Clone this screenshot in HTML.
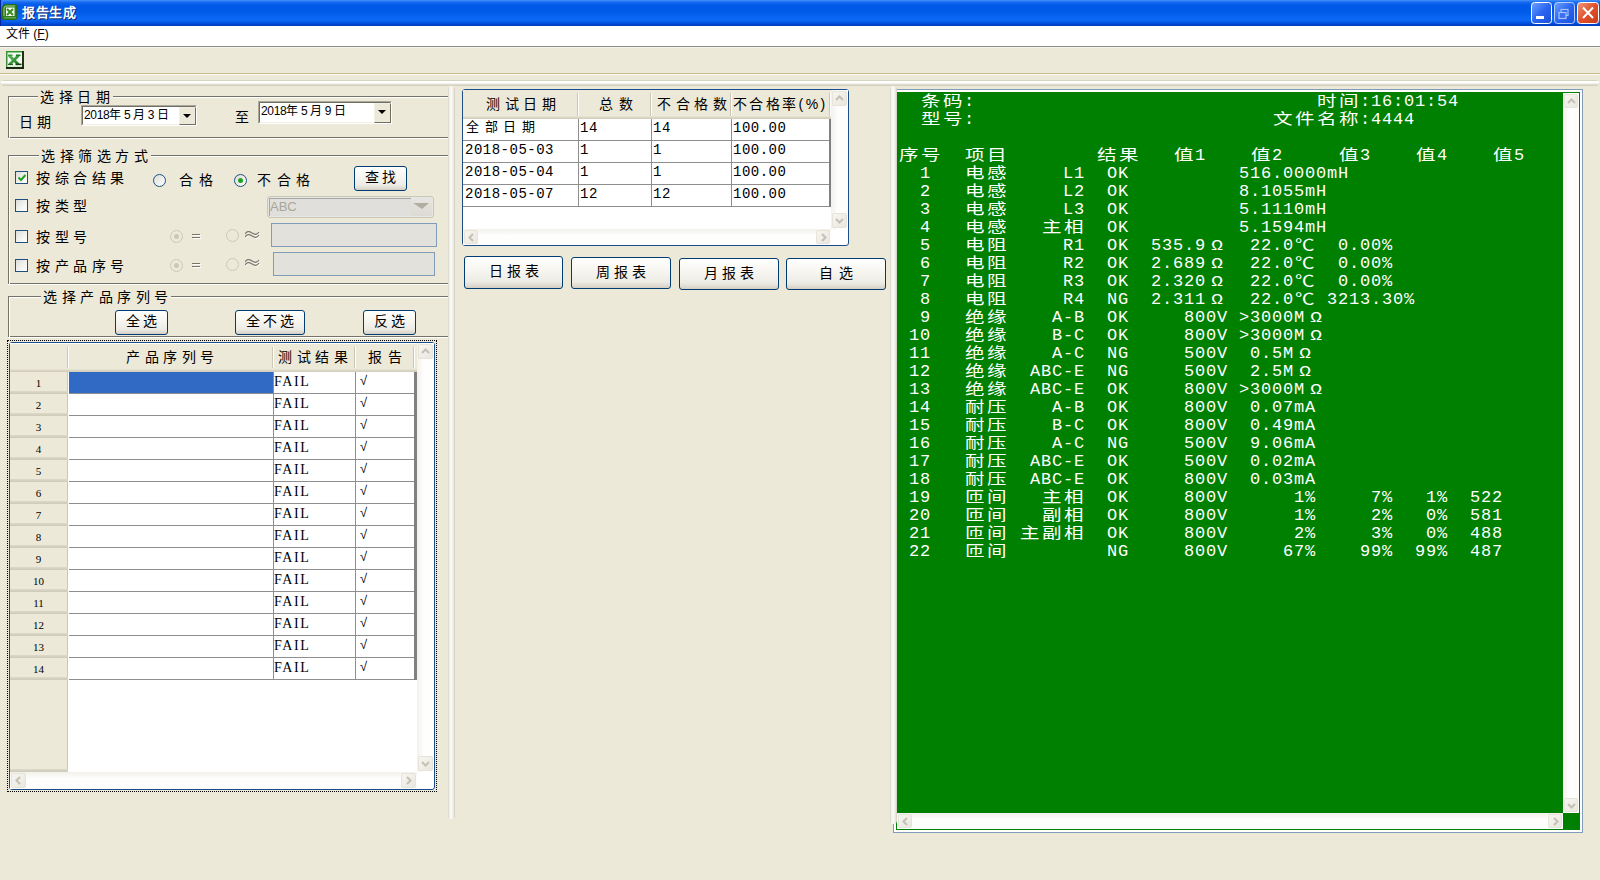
<!DOCTYPE html><html lang="zh-CN"><head><meta charset="utf-8"><title>报告生成</title><style>
*{margin:0;padding:0;box-sizing:border-box}
html,body{width:1600px;height:880px;overflow:hidden;background:#ece9d8;font-family:"Liberation Sans",sans-serif;}
.a,.t{position:absolute}
.t{white-space:pre;line-height:1;}
.btn{position:absolute;border:1px solid #003c74;border-radius:3px;background:linear-gradient(#ffffff 0%,#f7f6f1 40%,#ecebe4 80%,#d6d0c5 100%);box-shadow:inset 0 -1px 0 #d6d0c5;}
.sb{position:absolute;}
.gl{position:absolute;white-space:pre;line-height:18px;height:18px;font-family:"Liberation Mono",monospace;font-size:16px;color:#fff;}
.ga{font-family:"Liberation Mono",monospace;font-size:17px;letter-spacing:0.8px;}
.gc{display:inline-block;width:22px;font-style:normal;font-size:16px;text-align:center;transform:scale(1.22,0.95);transform-origin:50% 80%;}
.etch{position:absolute;border:1px solid #a9a697;}
</style></head><body>
<div class="a" style="left:0px;top:0px;width:1600px;height:26px;background:linear-gradient(#4a96fa 0px,#2a7cf6 1px,#0f64ee 3px,#0058e8 6px,#005ce8 12px,#0a66f4 18px,#0c68f6 20px,#0052de 23px,#0040c8 25px,#0038b8 26px);"></div>
<div class="a" style="left:0px;top:0px;width:1px;height:26px;background:#0024a0;"></div>
<div class="a" style="left:1px;top:0px;width:2px;height:26px;background:linear-gradient(#3a80f0,#0048d8);"></div>
<svg class="a" style="left:2px;top:4px" width="15" height="16" viewBox="0 0 15 16">
<path d="M4 0.5 H13.5 Q14.5 0.5 14.5 1.5 V14.5 Q14.5 15.5 13.5 15.5 H2 Q0.5 15.5 0.5 14 V4 Q0.5 0.5 4 0.5 Z" fill="#2f7d1f" stroke="#2a6a14"/>
<path d="M2 12 V4.5 Q2 2 4.5 2 H13" stroke="#9ad08a" stroke-width="1" fill="none"/>
<rect x="4" y="3.5" width="8.5" height="8.5" fill="#f4fbef"/>
<path d="M5 5 L11 11 M11 5 L5 11" stroke="#3a8a22" stroke-width="2"/>
<rect x="2" y="13" width="12" height="1.5" fill="#5aa04a"/>
</svg>
<div class="t " style="left:22px;top:6px;font-size:13px;color:#fff;font-weight:bold;text-shadow:1px 1px 0 #0a1e6a;letter-spacing:0.5px;">报告生成</div>
<svg class="a" style="left:1530px;top:2px" width="70" height="23" viewBox="0 0 70 23">
<defs>
<linearGradient id="gb" x1="0" y1="0" x2="1" y2="1"><stop offset="0" stop-color="#6fa2ff"/><stop offset="0.5" stop-color="#2a66f0"/><stop offset="1" stop-color="#1a50d8"/></linearGradient>
<linearGradient id="gr" x1="0" y1="0" x2="1" y2="1"><stop offset="0" stop-color="#f09a7a"/><stop offset="0.5" stop-color="#e0502a"/><stop offset="1" stop-color="#c83c1a"/></linearGradient>
</defs>
<rect x="1.5" y="0.5" width="20" height="21" rx="3" fill="url(#gb)" stroke="#fff"/>
<rect x="6" y="14" width="8" height="3" fill="#fff"/>
<rect x="24.5" y="0.5" width="20" height="21" rx="3" fill="url(#gb)" stroke="#d8e4ff" stroke-opacity="0.8"/>
<rect x="31" y="7.5" width="7" height="6" fill="none" stroke="#a8c0f8" stroke-width="1.2"/>
<rect x="29" y="10.5" width="7" height="6" fill="#3a70f0" stroke="#a8c0f8" stroke-width="1.2"/>
<rect x="47.5" y="0.5" width="21" height="21" rx="3" fill="url(#gr)" stroke="#fff"/>
<path d="M53 5.5 L63 16 M63 5.5 L53 16" stroke="#fff" stroke-width="2"/>
</svg>
<div class="a" style="left:0px;top:26px;width:1600px;height:20px;background:#fff;"></div>
<div class="t" style="left:6px;top:28px;font-size:12px;">文件 (<u>F</u>)</div>
<div class="a" style="left:0px;top:46px;width:1600px;height:1px;background:#8c8c8c;"></div>
<div class="a" style="left:0px;top:47px;width:1600px;height:1px;background:#f6f4ec;"></div>
<svg class="a" style="left:6px;top:51px" width="18" height="18" viewBox="0 0 18 18">
<defs><linearGradient id="xg" x1="0" y1="0" x2="1" y2="1"><stop offset="0" stop-color="#5cb85c"/><stop offset="1" stop-color="#1e7a1e"/></linearGradient></defs>
<rect x="0" y="0" width="18" height="18" fill="#3c8c3c"/>
<rect x="0" y="0" width="18" height="1.2" fill="#2a9a2a"/>
<rect x="16" y="0" width="2" height="18" fill="#1c3414"/>
<rect x="0" y="16" width="18" height="2" fill="#16280e"/>
<rect x="1.5" y="1.5" width="14.5" height="14.5" fill="#f2fbf2"/>
<path d="M3 4.5 L12.5 13.5 M12.5 4.5 L3.5 13.5" stroke="url(#xg)" stroke-width="2.8"/>
<rect x="2" y="3.5" width="4.5" height="1.6" fill="#3a9a3a"/>
<rect x="10" y="3.5" width="4.5" height="1.6" fill="#1e7a1e"/>
<rect x="9.5" y="12.6" width="6" height="1.6" fill="#1e3a12"/>
<rect x="2" y="12.8" width="5" height="1.2" fill="#2a5a1a"/>
<rect x="1.5" y="14.5" width="14.5" height="1.5" fill="#d4eed4"/>
</svg>
<div class="a" style="left:0px;top:73px;width:1600px;height:1px;background:#c5bb8f;"></div>
<div class="a" style="left:0px;top:74px;width:1600px;height:1px;background:#fbfaf4;"></div>
<div class="a" style="left:1px;top:80px;width:1598px;height:6px;border-radius:3px;background:linear-gradient(#d8d4c4 0px,#d8d4c4 1px,#fdfdfb 1px,#ffffff 3px,#e6e3d6 4px,#cfcbbb 6px);"></div>
<div class="a" style="left:8px;top:96px;width:441px;height:42px;border:1px solid #757368;"></div>
<div class="a" style="left:9px;top:97px;width:441px;height:42px;border-top:1px solid #fff;border-left:1px solid #fff;"></div>
<div class="a" style="left:8px;top:138px;width:442px;height:1px;background:#fff;"></div>
<div class="a" style="left:449px;top:96px;width:1px;height:43px;background:#fff;"></div>
<div class="t" style="left:38px;top:90px;font-size:14px;background:#ece9d8;padding:0 3px 0 2px;"><span style="letter-spacing:4.5px">选择日</span>期</div>
<div class="t " style="left:19px;top:115px;font-size:14px;color:#000;letter-spacing:4px;">日期</div>
<div class="a" style="left:81px;top:105px;width:116px;height:21px;background:#fff;border-top:1px solid #aca899;border-left:1px solid #aca899;border-right:1px solid #fff;border-bottom:1px solid #fff;"></div>
<div class="a" style="left:82px;top:106px;width:114px;height:19px;border-top:1px solid #716f64;border-left:1px solid #716f64;border-right:1px solid #f1efe2;border-bottom:1px solid #f1efe2;"></div>
<div class="a" style="left:179px;top:107px;width:17px;height:18px;background:#ece9d8;border-top:1px solid #f1efe2;border-left:1px solid #f1efe2;border-right:1px solid #716f64;border-bottom:1px solid #716f64;"></div>
<svg class="a" style="left:183px;top:114px" width="9" height="5"><path d="M0 0 H8 L4 4 Z" fill="#000"/></svg>
<div class="t" style="left:84px;top:109px;font-size:12px;letter-spacing:-0.35px;">2018年 5 月 3 日</div>
<div class="t " style="left:235px;top:110px;font-size:14px;color:#000;">至</div>
<div class="a" style="left:258px;top:101px;width:134px;height:23px;background:#fff;border-top:1px solid #aca899;border-left:1px solid #aca899;border-right:1px solid #fff;border-bottom:1px solid #fff;"></div>
<div class="a" style="left:259px;top:102px;width:132px;height:21px;border-top:1px solid #716f64;border-left:1px solid #716f64;border-right:1px solid #f1efe2;border-bottom:1px solid #f1efe2;"></div>
<div class="a" style="left:374px;top:103px;width:17px;height:20px;background:#ece9d8;border-top:1px solid #f1efe2;border-left:1px solid #f1efe2;border-right:1px solid #716f64;border-bottom:1px solid #716f64;"></div>
<svg class="a" style="left:378px;top:110px" width="9" height="5"><path d="M0 0 H8 L4 4 Z" fill="#000"/></svg>
<div class="t" style="left:261px;top:105px;font-size:12px;letter-spacing:-0.35px;">2018年 5 月 9 日</div>
<div class="a" style="left:8px;top:155px;width:441px;height:129px;border:1px solid #757368;"></div>
<div class="a" style="left:9px;top:156px;width:441px;height:129px;border-top:1px solid #fff;border-left:1px solid #fff;"></div>
<div class="a" style="left:8px;top:284px;width:442px;height:1px;background:#fff;"></div>
<div class="a" style="left:449px;top:155px;width:1px;height:130px;background:#fff;"></div>
<div class="t" style="left:39px;top:149px;font-size:14px;background:#ece9d8;padding:0 3px 0 2px;"><span style="letter-spacing:4.5px">选择筛选方</span>式</div>
<div class="a" style="left:15px;top:171px;width:13px;height:13px;border:1px solid #1c5180;background:linear-gradient(135deg,#dcdcd7 0%,#f4f4f1 60%,#fff 100%);"></div>
<svg class="a" style="left:18px;top:174px" width="8" height="8"><path d="M0.5 3.5 L3 6 L7.5 1" stroke="#21a121" stroke-width="2" fill="none"/></svg>
<div class="t " style="left:36px;top:171px;font-size:14px;color:#000;letter-spacing:4.6px;">按综合结果</div>
<div class="a" style="left:15px;top:199px;width:13px;height:13px;border:1px solid #1c5180;background:linear-gradient(135deg,#dcdcd7 0%,#f4f4f1 60%,#fff 100%);"></div>
<div class="t " style="left:36px;top:199px;font-size:14px;color:#000;letter-spacing:4.6px;">按类型</div>
<div class="a" style="left:15px;top:230px;width:13px;height:13px;border:1px solid #1c5180;background:linear-gradient(135deg,#dcdcd7 0%,#f4f4f1 60%,#fff 100%);"></div>
<div class="t " style="left:36px;top:230px;font-size:14px;color:#000;letter-spacing:4.6px;">按型号</div>
<div class="a" style="left:15px;top:259px;width:13px;height:13px;border:1px solid #1c5180;background:linear-gradient(135deg,#dcdcd7 0%,#f4f4f1 60%,#fff 100%);"></div>
<div class="t " style="left:36px;top:259px;font-size:14px;color:#000;letter-spacing:4.6px;">按产品序号</div>
<svg class="a" style="left:153px;top:174px" width="13" height="13"><defs><linearGradient id="rg153174" x1="0" y1="0" x2="1" y2="1"><stop offset="0" stop-color="#dcdcd7"/><stop offset="1" stop-color="#fff"/></linearGradient></defs><circle cx="6.5" cy="6.5" r="6" fill="url(#rg153174)" stroke="#1c5180"/></svg>
<div class="t " style="left:179px;top:173px;font-size:14px;color:#000;letter-spacing:6px;">合格</div>
<svg class="a" style="left:234px;top:174px" width="13" height="13"><defs><linearGradient id="rg234174" x1="0" y1="0" x2="1" y2="1"><stop offset="0" stop-color="#dcdcd7"/><stop offset="1" stop-color="#fff"/></linearGradient></defs><circle cx="6.5" cy="6.5" r="6" fill="url(#rg234174)" stroke="#1c5180"/><circle cx="6.5" cy="6.5" r="2.5" fill="#21a121"/></svg>
<div class="t " style="left:257px;top:173px;font-size:14px;color:#000;letter-spacing:5.5px;">不合格</div>
<div class="btn" style="left:354px;top:166px;width:53px;height:25px;"></div>
<div class="t" style="left:354px;top:170px;width:53px;text-align:center;font-size:14px;letter-spacing:3px;text-indent:3px;">查找</div>
<div class="a" style="left:267px;top:196px;width:167px;height:22px;border:1px solid #c9c7ba;border-radius:3px;background:#e6e5e0;"></div>
<div class="a" style="left:269px;top:198px;width:142px;height:18px;background:#e0dfdb;border-top:1px solid #a7a69f;border-left:1px solid #a7a69f;"></div>
<div class="t " style="left:270px;top:200px;font-size:13px;color:#a8a698;">ABC</div>
<div class="a" style="left:411px;top:198px;width:21px;height:18px;background:linear-gradient(#e6e5e0,#dcdad3);border-radius:0 2px 2px 0;"></div>
<svg class="a" style="left:412px;top:202px" width="18" height="8"><path d="M1 1 L17 1 L10 7 Z" fill="#b0aea2"/></svg>
<svg class="a" style="left:170px;top:230px" width="13" height="13"><circle cx="6.5" cy="6.5" r="6" fill="none" stroke="#cac8bb"/><circle cx="6.5" cy="6.5" r="2.5" fill="#cac8bb"/></svg>
<svg class="a" style="left:192px;top:233px" width="10" height="7"><path d="M0 1.5H8M0 4.5H8" stroke="#fff" stroke-width="1" transform="translate(1,1)"/><path d="M0 1.5H8M0 4.5H8" stroke="#76756a" stroke-width="1"/></svg>
<svg class="a" style="left:226px;top:229px" width="13" height="13"><circle cx="6.5" cy="6.5" r="6" fill="none" stroke="#cac8bb"/></svg>
<svg class="a" style="left:245px;top:231px" width="16" height="9"><path d="M0 3 C2 0,4 0,7 2 S12 4,14 1 M0 6 C2 3,4 3,7 5 S12 7,14 4" stroke="#fff" stroke-width="1" fill="none" transform="translate(1,1)"/><path d="M0 3 C2 0,4 0,7 2 S12 4,14 1 M0 6 C2 3,4 3,7 5 S12 7,14 4" stroke="#76756a" stroke-width="1.1" fill="none"/></svg>
<div class="a" style="left:271px;top:223px;width:166px;height:24px;border:1px solid #7f9db9;background:#e2e1dc;"></div>
<svg class="a" style="left:170px;top:259px" width="13" height="13"><circle cx="6.5" cy="6.5" r="6" fill="none" stroke="#cac8bb"/><circle cx="6.5" cy="6.5" r="2.5" fill="#cac8bb"/></svg>
<svg class="a" style="left:192px;top:262px" width="10" height="7"><path d="M0 1.5H8M0 4.5H8" stroke="#fff" stroke-width="1" transform="translate(1,1)"/><path d="M0 1.5H8M0 4.5H8" stroke="#76756a" stroke-width="1"/></svg>
<svg class="a" style="left:226px;top:258px" width="13" height="13"><circle cx="6.5" cy="6.5" r="6" fill="none" stroke="#cac8bb"/></svg>
<svg class="a" style="left:245px;top:259px" width="16" height="9"><path d="M0 3 C2 0,4 0,7 2 S12 4,14 1 M0 6 C2 3,4 3,7 5 S12 7,14 4" stroke="#fff" stroke-width="1" fill="none" transform="translate(1,1)"/><path d="M0 3 C2 0,4 0,7 2 S12 4,14 1 M0 6 C2 3,4 3,7 5 S12 7,14 4" stroke="#76756a" stroke-width="1.1" fill="none"/></svg>
<div class="a" style="left:273px;top:252px;width:162px;height:24px;border:1px solid #7f9db9;background:#e2e1dc;"></div>
<div class="a" style="left:8px;top:296px;width:441px;height:41px;border:1px solid #757368;"></div>
<div class="a" style="left:9px;top:297px;width:441px;height:41px;border-top:1px solid #fff;border-left:1px solid #fff;"></div>
<div class="a" style="left:8px;top:337px;width:442px;height:1px;background:#fff;"></div>
<div class="a" style="left:449px;top:296px;width:1px;height:42px;background:#fff;"></div>
<div class="t" style="left:41px;top:290px;font-size:14px;background:#ece9d8;padding:0 3px 0 2px;"><span style="letter-spacing:4.5px">选择产品序列</span>号</div>
<div class="btn" style="left:115px;top:310px;width:53px;height:25px;"></div>
<div class="t" style="left:115px;top:314px;width:53px;text-align:center;font-size:14px;letter-spacing:3px;text-indent:3px;">全选</div>
<div class="btn" style="left:235px;top:310px;width:70px;height:25px;"></div>
<div class="t" style="left:235px;top:314px;width:70px;text-align:center;font-size:14px;letter-spacing:3px;text-indent:3px;">全不选</div>
<div class="btn" style="left:363px;top:310px;width:53px;height:25px;"></div>
<div class="t" style="left:363px;top:314px;width:53px;text-align:center;font-size:14px;letter-spacing:3px;text-indent:3px;">反选</div>
<div class="a" style="left:7px;top:340px;width:430px;height:452px;border:1px dotted #000;"></div>
<div class="a" style="left:9px;top:342px;width:426px;height:448px;border:1px solid #1c4d8a;border-radius:3px;background:#fff;"></div>
<div class="a" style="left:10px;top:343px;width:407px;height:29px;background:linear-gradient(#fff 0px,#fff 1px,#ece9d8 1px,#ece9d8 26px,#dedacb 27px,#d0cbb8 29px);"></div>
<div class="a" style="left:67px;top:347px;width:1px;height:21px;background:#cbc7b8;"></div>
<div class="a" style="left:68px;top:347px;width:1px;height:21px;background:#fff;"></div>
<div class="a" style="left:272px;top:347px;width:1px;height:21px;background:#cbc7b8;"></div>
<div class="a" style="left:273px;top:347px;width:1px;height:21px;background:#fff;"></div>
<div class="a" style="left:413px;top:347px;width:1px;height:21px;background:#cbc7b8;"></div>
<div class="a" style="left:414px;top:347px;width:1px;height:21px;background:#fff;"></div>
<div class="a" style="left:354px;top:347px;width:1px;height:21px;background:#cbc7b8;"></div>
<div class="a" style="left:355px;top:347px;width:1px;height:21px;background:#fff;"></div>
<div class="t " style="left:126px;top:350px;font-size:14px;color:#000;letter-spacing:4.5px;">产品序列号</div>
<div class="t " style="left:278px;top:350px;font-size:14px;color:#000;letter-spacing:4.5px;">测试结果</div>
<div class="t " style="left:368px;top:350px;font-size:14px;color:#000;letter-spacing:6px;">报告</div>
<div class="a" style="left:10px;top:372px;width:58px;height:400px;background:#ece9d8;"></div>
<div class="a" style="left:67px;top:372px;width:1px;height:399px;background:#cbc7b8;"></div>
<div class="a" style="left:68px;top:372px;width:1px;height:399px;background:#fff;"></div>
<div class="a" style="left:10px;top:769px;width:58px;height:3px;background:linear-gradient(#dedacb,#cdc9b6);"></div>
<div class="a" style="left:10px;top:391px;width:58px;height:3px;background:linear-gradient(#dedacb,#cdc9b6);"></div>
<div class="t " style="left:10px;top:378px;font-size:11px;color:#000;width:57px;text-align:center;font-family:'Liberation Serif',serif;">1</div>
<div class="a" style="left:69px;top:372px;width:204px;height:21px;background:#316ac5;"></div>
<div class="t " style="left:274px;top:375px;font-size:14px;color:#000;letter-spacing:1.6px;font-family:'Liberation Serif',serif;">FAIL</div>
<div class="t " style="left:360px;top:374px;font-size:13px;color:#000;">√</div>
<div class="a" style="left:10px;top:413px;width:58px;height:3px;background:linear-gradient(#dedacb,#cdc9b6);"></div>
<div class="t " style="left:10px;top:400px;font-size:11px;color:#000;width:57px;text-align:center;font-family:'Liberation Serif',serif;">2</div>
<div class="t " style="left:274px;top:397px;font-size:14px;color:#000;letter-spacing:1.6px;font-family:'Liberation Serif',serif;">FAIL</div>
<div class="t " style="left:360px;top:396px;font-size:13px;color:#000;">√</div>
<div class="a" style="left:10px;top:435px;width:58px;height:3px;background:linear-gradient(#dedacb,#cdc9b6);"></div>
<div class="t " style="left:10px;top:422px;font-size:11px;color:#000;width:57px;text-align:center;font-family:'Liberation Serif',serif;">3</div>
<div class="t " style="left:274px;top:419px;font-size:14px;color:#000;letter-spacing:1.6px;font-family:'Liberation Serif',serif;">FAIL</div>
<div class="t " style="left:360px;top:418px;font-size:13px;color:#000;">√</div>
<div class="a" style="left:10px;top:457px;width:58px;height:3px;background:linear-gradient(#dedacb,#cdc9b6);"></div>
<div class="t " style="left:10px;top:444px;font-size:11px;color:#000;width:57px;text-align:center;font-family:'Liberation Serif',serif;">4</div>
<div class="t " style="left:274px;top:441px;font-size:14px;color:#000;letter-spacing:1.6px;font-family:'Liberation Serif',serif;">FAIL</div>
<div class="t " style="left:360px;top:440px;font-size:13px;color:#000;">√</div>
<div class="a" style="left:10px;top:479px;width:58px;height:3px;background:linear-gradient(#dedacb,#cdc9b6);"></div>
<div class="t " style="left:10px;top:466px;font-size:11px;color:#000;width:57px;text-align:center;font-family:'Liberation Serif',serif;">5</div>
<div class="t " style="left:274px;top:463px;font-size:14px;color:#000;letter-spacing:1.6px;font-family:'Liberation Serif',serif;">FAIL</div>
<div class="t " style="left:360px;top:462px;font-size:13px;color:#000;">√</div>
<div class="a" style="left:10px;top:501px;width:58px;height:3px;background:linear-gradient(#dedacb,#cdc9b6);"></div>
<div class="t " style="left:10px;top:488px;font-size:11px;color:#000;width:57px;text-align:center;font-family:'Liberation Serif',serif;">6</div>
<div class="t " style="left:274px;top:485px;font-size:14px;color:#000;letter-spacing:1.6px;font-family:'Liberation Serif',serif;">FAIL</div>
<div class="t " style="left:360px;top:484px;font-size:13px;color:#000;">√</div>
<div class="a" style="left:10px;top:523px;width:58px;height:3px;background:linear-gradient(#dedacb,#cdc9b6);"></div>
<div class="t " style="left:10px;top:510px;font-size:11px;color:#000;width:57px;text-align:center;font-family:'Liberation Serif',serif;">7</div>
<div class="t " style="left:274px;top:507px;font-size:14px;color:#000;letter-spacing:1.6px;font-family:'Liberation Serif',serif;">FAIL</div>
<div class="t " style="left:360px;top:506px;font-size:13px;color:#000;">√</div>
<div class="a" style="left:10px;top:545px;width:58px;height:3px;background:linear-gradient(#dedacb,#cdc9b6);"></div>
<div class="t " style="left:10px;top:532px;font-size:11px;color:#000;width:57px;text-align:center;font-family:'Liberation Serif',serif;">8</div>
<div class="t " style="left:274px;top:529px;font-size:14px;color:#000;letter-spacing:1.6px;font-family:'Liberation Serif',serif;">FAIL</div>
<div class="t " style="left:360px;top:528px;font-size:13px;color:#000;">√</div>
<div class="a" style="left:10px;top:567px;width:58px;height:3px;background:linear-gradient(#dedacb,#cdc9b6);"></div>
<div class="t " style="left:10px;top:554px;font-size:11px;color:#000;width:57px;text-align:center;font-family:'Liberation Serif',serif;">9</div>
<div class="t " style="left:274px;top:551px;font-size:14px;color:#000;letter-spacing:1.6px;font-family:'Liberation Serif',serif;">FAIL</div>
<div class="t " style="left:360px;top:550px;font-size:13px;color:#000;">√</div>
<div class="a" style="left:10px;top:589px;width:58px;height:3px;background:linear-gradient(#dedacb,#cdc9b6);"></div>
<div class="t " style="left:10px;top:576px;font-size:11px;color:#000;width:57px;text-align:center;font-family:'Liberation Serif',serif;">10</div>
<div class="t " style="left:274px;top:573px;font-size:14px;color:#000;letter-spacing:1.6px;font-family:'Liberation Serif',serif;">FAIL</div>
<div class="t " style="left:360px;top:572px;font-size:13px;color:#000;">√</div>
<div class="a" style="left:10px;top:611px;width:58px;height:3px;background:linear-gradient(#dedacb,#cdc9b6);"></div>
<div class="t " style="left:10px;top:598px;font-size:11px;color:#000;width:57px;text-align:center;font-family:'Liberation Serif',serif;">11</div>
<div class="t " style="left:274px;top:595px;font-size:14px;color:#000;letter-spacing:1.6px;font-family:'Liberation Serif',serif;">FAIL</div>
<div class="t " style="left:360px;top:594px;font-size:13px;color:#000;">√</div>
<div class="a" style="left:10px;top:633px;width:58px;height:3px;background:linear-gradient(#dedacb,#cdc9b6);"></div>
<div class="t " style="left:10px;top:620px;font-size:11px;color:#000;width:57px;text-align:center;font-family:'Liberation Serif',serif;">12</div>
<div class="t " style="left:274px;top:617px;font-size:14px;color:#000;letter-spacing:1.6px;font-family:'Liberation Serif',serif;">FAIL</div>
<div class="t " style="left:360px;top:616px;font-size:13px;color:#000;">√</div>
<div class="a" style="left:10px;top:655px;width:58px;height:3px;background:linear-gradient(#dedacb,#cdc9b6);"></div>
<div class="t " style="left:10px;top:642px;font-size:11px;color:#000;width:57px;text-align:center;font-family:'Liberation Serif',serif;">13</div>
<div class="t " style="left:274px;top:639px;font-size:14px;color:#000;letter-spacing:1.6px;font-family:'Liberation Serif',serif;">FAIL</div>
<div class="t " style="left:360px;top:638px;font-size:13px;color:#000;">√</div>
<div class="a" style="left:10px;top:677px;width:58px;height:3px;background:linear-gradient(#dedacb,#cdc9b6);"></div>
<div class="t " style="left:10px;top:664px;font-size:11px;color:#000;width:57px;text-align:center;font-family:'Liberation Serif',serif;">14</div>
<div class="t " style="left:274px;top:661px;font-size:14px;color:#000;letter-spacing:1.6px;font-family:'Liberation Serif',serif;">FAIL</div>
<div class="t " style="left:360px;top:660px;font-size:13px;color:#000;">√</div>
<div class="a" style="left:69px;top:393px;width:345px;height:1px;background:#8e8e8e;"></div>
<div class="a" style="left:69px;top:415px;width:345px;height:1px;background:#8e8e8e;"></div>
<div class="a" style="left:69px;top:437px;width:345px;height:1px;background:#8e8e8e;"></div>
<div class="a" style="left:69px;top:459px;width:345px;height:1px;background:#8e8e8e;"></div>
<div class="a" style="left:69px;top:481px;width:345px;height:1px;background:#8e8e8e;"></div>
<div class="a" style="left:69px;top:503px;width:345px;height:1px;background:#8e8e8e;"></div>
<div class="a" style="left:69px;top:525px;width:345px;height:1px;background:#8e8e8e;"></div>
<div class="a" style="left:69px;top:547px;width:345px;height:1px;background:#8e8e8e;"></div>
<div class="a" style="left:69px;top:569px;width:345px;height:1px;background:#8e8e8e;"></div>
<div class="a" style="left:69px;top:591px;width:345px;height:1px;background:#8e8e8e;"></div>
<div class="a" style="left:69px;top:613px;width:345px;height:1px;background:#8e8e8e;"></div>
<div class="a" style="left:69px;top:635px;width:345px;height:1px;background:#8e8e8e;"></div>
<div class="a" style="left:69px;top:657px;width:345px;height:1px;background:#8e8e8e;"></div>
<div class="a" style="left:69px;top:679px;width:345px;height:1px;background:#8e8e8e;"></div>
<div class="a" style="left:273px;top:372px;width:1px;height:308px;background:#8e8e8e;"></div>
<div class="a" style="left:355px;top:372px;width:1px;height:308px;background:#8e8e8e;"></div>
<div class="a" style="left:414px;top:372px;width:3px;height:308px;background:#808080;"></div>
<div class="a" style="left:417px;top:343px;width:17px;height:429px;background:linear-gradient(90deg,#f3f1ea,#fefefe 40%,#fdfdfb);"></div>
<div class="a" style="left:418px;top:344px;width:15px;height:15px;border:1px solid #e6e3d8;border-radius:2px;background:linear-gradient(135deg,#f6f5f0,#e9e7df);"></div>
<svg class="a" style="left:421px;top:348px" width="9" height="6"><path d="M1 5 L4.5 1.5 L8 5" stroke="#c4c1b4" stroke-width="2" fill="none"/></svg>
<div class="a" style="left:418px;top:756px;width:15px;height:15px;border:1px solid #e6e3d8;border-radius:2px;background:linear-gradient(135deg,#f6f5f0,#e9e7df);"></div>
<svg class="a" style="left:421px;top:761px" width="9" height="6"><path d="M1 1 L4.5 4.5 L8 1" stroke="#c4c1b4" stroke-width="2" fill="none"/></svg>
<div class="a" style="left:10px;top:772px;width:407px;height:17px;background:linear-gradient(#f3f1ea,#fefefe 40%,#fdfdfb);"></div>
<div class="a" style="left:11px;top:773px;width:15px;height:15px;border:1px solid #e6e3d8;border-radius:2px;background:linear-gradient(135deg,#f6f5f0,#e9e7df);"></div>
<svg class="a" style="left:15px;top:776px" width="6" height="9"><path d="M5 1 L1.5 4.5 L5 8" stroke="#c4c1b4" stroke-width="2" fill="none"/></svg>
<div class="a" style="left:401px;top:773px;width:15px;height:15px;border:1px solid #e6e3d8;border-radius:2px;background:linear-gradient(135deg,#f6f5f0,#e9e7df);"></div>
<svg class="a" style="left:406px;top:776px" width="6" height="9"><path d="M1 1 L4.5 4.5 L1 8" stroke="#c4c1b4" stroke-width="2" fill="none"/></svg>
<div class="a" style="left:448px;top:86px;width:7px;height:733px;border-radius:3.5px;background:linear-gradient(90deg,#d4d0c0 0px,#f2f1ec 1.5px,#fafaf7 3px,#f0efe9 5px,#d0ccbc 7px);"></div>
<div class="a" style="left:462px;top:89px;width:387px;height:157px;border:1px solid #1c4d8a;border-radius:3px;background:#fff;"></div>
<div class="a" style="left:463px;top:90px;width:368px;height:29px;background:linear-gradient(#ece9d8 0px,#ece9d8 26px,#dedacb 27px,#d0cbb8 29px);"></div>
<div class="a" style="left:577px;top:93px;width:1px;height:23px;background:#cbc7b8;"></div>
<div class="a" style="left:578px;top:93px;width:1px;height:23px;background:#fff;"></div>
<div class="a" style="left:650px;top:93px;width:1px;height:23px;background:#cbc7b8;"></div>
<div class="a" style="left:651px;top:93px;width:1px;height:23px;background:#fff;"></div>
<div class="a" style="left:730px;top:93px;width:1px;height:23px;background:#cbc7b8;"></div>
<div class="a" style="left:731px;top:93px;width:1px;height:23px;background:#fff;"></div>
<div class="a" style="left:829px;top:93px;width:1px;height:23px;background:#cbc7b8;"></div>
<div class="a" style="left:830px;top:93px;width:1px;height:23px;background:#fff;"></div>
<div class="t " style="left:486px;top:97px;font-size:14px;color:#000;letter-spacing:4.5px;">测试日期</div>
<div class="t " style="left:599px;top:97px;font-size:14px;color:#000;letter-spacing:6px;">总数</div>
<div class="t " style="left:657px;top:97px;font-size:14px;color:#000;letter-spacing:4.5px;">不合格数</div>
<div class="t " style="left:733px;top:97px;font-size:14px;color:#000;letter-spacing:2.4px;">不合格率(%)</div>
<div class="t " style="left:466px;top:120px;font-size:13px;color:#000;letter-spacing:5.5px;">全部日期</div>
<div class="t " style="left:580px;top:121px;font-size:14px;color:#000;letter-spacing:0.5px;font-family:'Liberation Mono',monospace;">14</div>
<div class="t " style="left:653px;top:121px;font-size:14px;color:#000;letter-spacing:0.5px;font-family:'Liberation Mono',monospace;">14</div>
<div class="t " style="left:733px;top:121px;font-size:14px;color:#000;letter-spacing:0.5px;font-family:'Liberation Mono',monospace;">100.00</div>
<div class="a" style="left:463px;top:140px;width:367px;height:1px;background:#8e8e8e;"></div>
<div class="t " style="left:465px;top:143px;font-size:14px;color:#000;letter-spacing:0.5px;font-family:'Liberation Mono',monospace;">2018-05-03</div>
<div class="t " style="left:580px;top:143px;font-size:14px;color:#000;letter-spacing:0.5px;font-family:'Liberation Mono',monospace;">1</div>
<div class="t " style="left:653px;top:143px;font-size:14px;color:#000;letter-spacing:0.5px;font-family:'Liberation Mono',monospace;">1</div>
<div class="t " style="left:733px;top:143px;font-size:14px;color:#000;letter-spacing:0.5px;font-family:'Liberation Mono',monospace;">100.00</div>
<div class="a" style="left:463px;top:162px;width:367px;height:1px;background:#8e8e8e;"></div>
<div class="t " style="left:465px;top:165px;font-size:14px;color:#000;letter-spacing:0.5px;font-family:'Liberation Mono',monospace;">2018-05-04</div>
<div class="t " style="left:580px;top:165px;font-size:14px;color:#000;letter-spacing:0.5px;font-family:'Liberation Mono',monospace;">1</div>
<div class="t " style="left:653px;top:165px;font-size:14px;color:#000;letter-spacing:0.5px;font-family:'Liberation Mono',monospace;">1</div>
<div class="t " style="left:733px;top:165px;font-size:14px;color:#000;letter-spacing:0.5px;font-family:'Liberation Mono',monospace;">100.00</div>
<div class="a" style="left:463px;top:184px;width:367px;height:1px;background:#8e8e8e;"></div>
<div class="t " style="left:465px;top:187px;font-size:14px;color:#000;letter-spacing:0.5px;font-family:'Liberation Mono',monospace;">2018-05-07</div>
<div class="t " style="left:580px;top:187px;font-size:14px;color:#000;letter-spacing:0.5px;font-family:'Liberation Mono',monospace;">12</div>
<div class="t " style="left:653px;top:187px;font-size:14px;color:#000;letter-spacing:0.5px;font-family:'Liberation Mono',monospace;">12</div>
<div class="t " style="left:733px;top:187px;font-size:14px;color:#000;letter-spacing:0.5px;font-family:'Liberation Mono',monospace;">100.00</div>
<div class="a" style="left:463px;top:206px;width:367px;height:1px;background:#8e8e8e;"></div>
<div class="a" style="left:578px;top:119px;width:1px;height:88px;background:#8e8e8e;"></div>
<div class="a" style="left:651px;top:119px;width:1px;height:88px;background:#8e8e8e;"></div>
<div class="a" style="left:731px;top:119px;width:1px;height:88px;background:#8e8e8e;"></div>
<div class="a" style="left:829px;top:119px;width:2px;height:88px;background:#808080;"></div>
<div class="a" style="left:831px;top:90px;width:17px;height:139px;background:linear-gradient(90deg,#f3f1ea,#fefefe 40%,#fdfdfb);"></div>
<div class="a" style="left:832px;top:91px;width:15px;height:15px;border:1px solid #e6e3d8;border-radius:2px;background:linear-gradient(135deg,#f6f5f0,#e9e7df);"></div>
<svg class="a" style="left:835px;top:95px" width="9" height="6"><path d="M1 5 L4.5 1.5 L8 5" stroke="#c4c1b4" stroke-width="2" fill="none"/></svg>
<div class="a" style="left:832px;top:213px;width:15px;height:15px;border:1px solid #e6e3d8;border-radius:2px;background:linear-gradient(135deg,#f6f5f0,#e9e7df);"></div>
<svg class="a" style="left:835px;top:218px" width="9" height="6"><path d="M1 1 L4.5 4.5 L8 1" stroke="#c4c1b4" stroke-width="2" fill="none"/></svg>
<div class="a" style="left:463px;top:229px;width:368px;height:16px;background:linear-gradient(#f3f1ea,#fefefe 40%,#fdfdfb);"></div>
<div class="a" style="left:464px;top:230px;width:14px;height:14px;border:1px solid #e6e3d8;border-radius:2px;background:linear-gradient(135deg,#f6f5f0,#e9e7df);"></div>
<svg class="a" style="left:468px;top:233px" width="6" height="9"><path d="M5 1 L1.5 4.5 L5 8" stroke="#c4c1b4" stroke-width="2" fill="none"/></svg>
<div class="a" style="left:816px;top:230px;width:14px;height:14px;border:1px solid #e6e3d8;border-radius:2px;background:linear-gradient(135deg,#f6f5f0,#e9e7df);"></div>
<svg class="a" style="left:821px;top:233px" width="6" height="9"><path d="M1 1 L4.5 4.5 L1 8" stroke="#c4c1b4" stroke-width="2" fill="none"/></svg>
<div class="btn" style="left:464px;top:256px;width:99px;height:33px;"></div>
<div class="t" style="left:464px;top:264px;width:99px;text-align:center;font-size:14px;letter-spacing:4px;text-indent:4px;">日报表</div>
<div class="btn" style="left:571px;top:257px;width:100px;height:32px;"></div>
<div class="t" style="left:571px;top:265px;width:100px;text-align:center;font-size:14px;letter-spacing:4px;text-indent:4px;">周报表</div>
<div class="btn" style="left:679px;top:258px;width:100px;height:32px;"></div>
<div class="t" style="left:679px;top:266px;width:100px;text-align:center;font-size:14px;letter-spacing:4px;text-indent:4px;">月报表</div>
<div class="btn" style="left:786px;top:258px;width:100px;height:32px;"></div>
<div class="t" style="left:786px;top:266px;width:100px;text-align:center;font-size:14px;letter-spacing:6px;text-indent:6px;">自选</div>
<div class="a" style="left:893px;top:89px;width:690px;height:744px;border:1px solid #7f9db9;background:#fff;"></div>
<div class="a" style="left:896px;top:92px;width:684px;height:738px;background:#008000;"></div>
<div class="gl" style="left:898px;top:93px"><span class="ga">  </span><i class="gc">条</i><i class="gc">码</i><span class="ga">:                               </span><i class="gc">时</i><i class="gc">间</i><span class="ga">:16:01:54</span></div>
<div class="gl" style="left:898px;top:111px"><span class="ga">  </span><i class="gc">型</i><i class="gc">号</i><span class="ga">:                           </span><i class="gc">文</i><i class="gc">件</i><i class="gc">名</i><i class="gc">称</i><span class="ga">:4444</span></div>
<div class="gl" style="left:898px;top:147px"><i class="gc">序</i><i class="gc">号</i><span class="ga">  </span><i class="gc">项</i><i class="gc">目</i><span class="ga">        </span><i class="gc">结</i><i class="gc">果</i><span class="ga">   </span><i class="gc">值</i><span class="ga">1    </span><i class="gc">值</i><span class="ga">2     </span><i class="gc">值</i><span class="ga">3    </span><i class="gc">值</i><span class="ga">4    </span><i class="gc">值</i><span class="ga">5</span></div>
<div class="gl" style="left:898px;top:165px"><span class="ga">  1   </span><i class="gc">电</i><i class="gc">感</i><span class="ga">     L1  OK          516.0000mH</span></div>
<div class="gl" style="left:898px;top:183px"><span class="ga">  2   </span><i class="gc">电</i><i class="gc">感</i><span class="ga">     L2  OK          8.1055mH</span></div>
<div class="gl" style="left:898px;top:201px"><span class="ga">  3   </span><i class="gc">电</i><i class="gc">感</i><span class="ga">     L3  OK          5.1110mH</span></div>
<div class="gl" style="left:898px;top:219px"><span class="ga">  4   </span><i class="gc">电</i><i class="gc">感</i><span class="ga">   </span><i class="gc">主</i><i class="gc">相</i><span class="ga">  OK          5.1594mH</span></div>
<div class="gl" style="left:898px;top:237px"><span class="ga">  5   </span><i class="gc">电</i><i class="gc">阻</i><span class="ga">     R1  OK  535.9</span><i class="gc">Ω</i><span class="ga">  22.0</span><i class="gc">℃</i><span class="ga">  0.00%</span></div>
<div class="gl" style="left:898px;top:255px"><span class="ga">  6   </span><i class="gc">电</i><i class="gc">阻</i><span class="ga">     R2  OK  2.689</span><i class="gc">Ω</i><span class="ga">  22.0</span><i class="gc">℃</i><span class="ga">  0.00%</span></div>
<div class="gl" style="left:898px;top:273px"><span class="ga">  7   </span><i class="gc">电</i><i class="gc">阻</i><span class="ga">     R3  OK  2.320</span><i class="gc">Ω</i><span class="ga">  22.0</span><i class="gc">℃</i><span class="ga">  0.00%</span></div>
<div class="gl" style="left:898px;top:291px"><span class="ga">  8   </span><i class="gc">电</i><i class="gc">阻</i><span class="ga">     R4  NG  2.311</span><i class="gc">Ω</i><span class="ga">  22.0</span><i class="gc">℃</i><span class="ga"> 3213.30%</span></div>
<div class="gl" style="left:898px;top:309px"><span class="ga">  9   </span><i class="gc">绝</i><i class="gc">缘</i><span class="ga">    A-B  OK     800V &gt;3000M</span><i class="gc">Ω</i></div>
<div class="gl" style="left:898px;top:327px"><span class="ga"> 10   </span><i class="gc">绝</i><i class="gc">缘</i><span class="ga">    B-C  OK     800V &gt;3000M</span><i class="gc">Ω</i></div>
<div class="gl" style="left:898px;top:345px"><span class="ga"> 11   </span><i class="gc">绝</i><i class="gc">缘</i><span class="ga">    A-C  NG     500V  0.5M</span><i class="gc">Ω</i></div>
<div class="gl" style="left:898px;top:363px"><span class="ga"> 12   </span><i class="gc">绝</i><i class="gc">缘</i><span class="ga">  ABC-E  NG     500V  2.5M</span><i class="gc">Ω</i></div>
<div class="gl" style="left:898px;top:381px"><span class="ga"> 13   </span><i class="gc">绝</i><i class="gc">缘</i><span class="ga">  ABC-E  OK     800V &gt;3000M</span><i class="gc">Ω</i></div>
<div class="gl" style="left:898px;top:399px"><span class="ga"> 14   </span><i class="gc">耐</i><i class="gc">压</i><span class="ga">    A-B  OK     800V  0.07mA</span></div>
<div class="gl" style="left:898px;top:417px"><span class="ga"> 15   </span><i class="gc">耐</i><i class="gc">压</i><span class="ga">    B-C  OK     800V  0.49mA</span></div>
<div class="gl" style="left:898px;top:435px"><span class="ga"> 16   </span><i class="gc">耐</i><i class="gc">压</i><span class="ga">    A-C  NG     500V  9.06mA</span></div>
<div class="gl" style="left:898px;top:453px"><span class="ga"> 17   </span><i class="gc">耐</i><i class="gc">压</i><span class="ga">  ABC-E  OK     500V  0.02mA</span></div>
<div class="gl" style="left:898px;top:471px"><span class="ga"> 18   </span><i class="gc">耐</i><i class="gc">压</i><span class="ga">  ABC-E  OK     800V  0.03mA</span></div>
<div class="gl" style="left:898px;top:489px"><span class="ga"> 19   </span><i class="gc">匝</i><i class="gc">间</i><span class="ga">   </span><i class="gc">主</i><i class="gc">相</i><span class="ga">  OK     800V      1%     7%   1%  522</span></div>
<div class="gl" style="left:898px;top:507px"><span class="ga"> 20   </span><i class="gc">匝</i><i class="gc">间</i><span class="ga">   </span><i class="gc">副</i><i class="gc">相</i><span class="ga">  OK     800V      1%     2%   0%  581</span></div>
<div class="gl" style="left:898px;top:525px"><span class="ga"> 21   </span><i class="gc">匝</i><i class="gc">间</i><span class="ga"> </span><i class="gc">主</i><i class="gc">副</i><i class="gc">相</i><span class="ga">  OK     800V      2%     3%   0%  488</span></div>
<div class="gl" style="left:898px;top:543px"><span class="ga"> 22   </span><i class="gc">匝</i><i class="gc">间</i><span class="ga">         NG     800V     67%    99%  99%  487</span></div>
<div class="a" style="left:1563px;top:93px;width:16px;height:720px;background:linear-gradient(90deg,#f3f1ea,#fefefe 40%,#fdfdfb);"></div>
<div class="a" style="left:1564px;top:94px;width:14px;height:14px;border:1px solid #e6e3d8;border-radius:2px;background:linear-gradient(135deg,#f6f5f0,#e9e7df);"></div>
<svg class="a" style="left:1567px;top:98px" width="9" height="6"><path d="M1 5 L4.5 1.5 L8 5" stroke="#c4c1b4" stroke-width="2" fill="none"/></svg>
<div class="a" style="left:1564px;top:798px;width:14px;height:14px;border:1px solid #e6e3d8;border-radius:2px;background:linear-gradient(135deg,#f6f5f0,#e9e7df);"></div>
<svg class="a" style="left:1567px;top:803px" width="9" height="6"><path d="M1 1 L4.5 4.5 L8 1" stroke="#c4c1b4" stroke-width="2" fill="none"/></svg>
<div class="a" style="left:897px;top:813px;width:666px;height:16px;background:linear-gradient(#f3f1ea,#fefefe 40%,#fdfdfb);"></div>
<div class="a" style="left:898px;top:814px;width:14px;height:14px;border:1px solid #e6e3d8;border-radius:2px;background:linear-gradient(135deg,#f6f5f0,#e9e7df);"></div>
<svg class="a" style="left:902px;top:817px" width="6" height="9"><path d="M5 1 L1.5 4.5 L5 8" stroke="#c4c1b4" stroke-width="2" fill="none"/></svg>
<div class="a" style="left:1548px;top:814px;width:14px;height:14px;border:1px solid #e6e3d8;border-radius:2px;background:linear-gradient(135deg,#f6f5f0,#e9e7df);"></div>
<svg class="a" style="left:1553px;top:817px" width="6" height="9"><path d="M1 1 L4.5 4.5 L1 8" stroke="#c4c1b4" stroke-width="2" fill="none"/></svg>
<div class="a" style="left:890px;top:86px;width:7px;height:738px;border-radius:3.5px;background:linear-gradient(90deg,#d4d0c0 0px,#f2f1ec 1.5px,#fafaf7 3px,#f0efe9 5px,#d0ccbc 7px);"></div>
</body></html>
